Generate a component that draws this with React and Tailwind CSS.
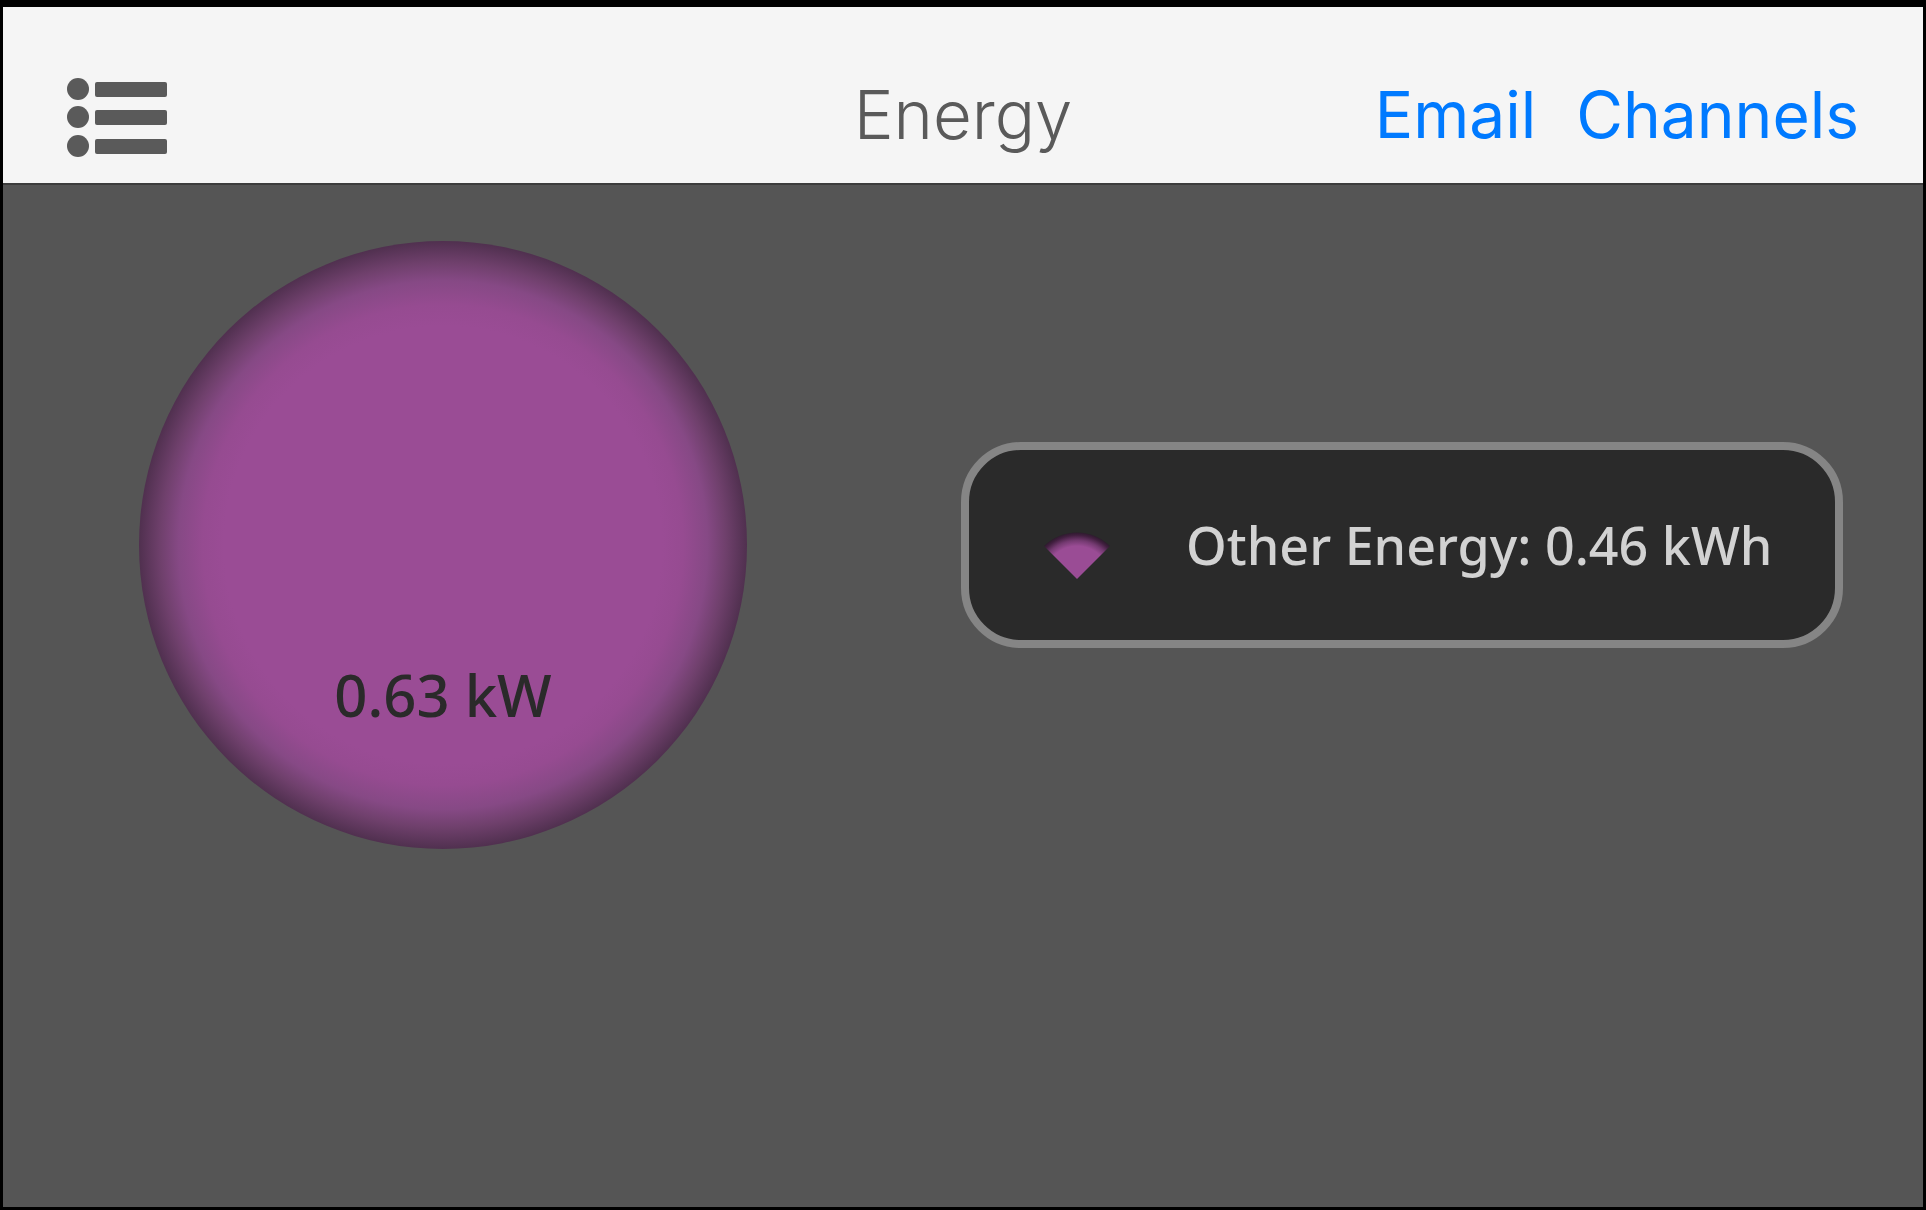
const menuRows = [18, 46, 75];

const readings = [{ label: "Other Energy", value: "0.46 kWh" }];

function MenuIcon() {
  return (
    <svg width="100" height="84" viewBox="0 0 100 84" fill="#5a5a5a" overflow="visible" aria-hidden="true">
      {menuRows.map((y) => (
        <g key={y}>
          <circle cx="11" cy={y} r="11" />
          <rect x="28" y={y - 7} width="72" height="15" rx="2" />
        </g>
      ))}
    </svg>
  );
}

function WedgeIcon() {
  return (
    <svg width="66" height="68" viewBox="0 0 66 68" aria-hidden="true">
      <defs>
        <radialGradient id="wedge" gradientUnits="userSpaceOnUse" cx="33" cy="68" r="47">
          <stop offset="0.7" stopColor="#9a4c95" />
          <stop offset="0.82" stopColor="#743a71" />
          <stop offset="0.93" stopColor="#421f40" />
          <stop offset="1" stopColor="#2a1a2a" />
        </radialGradient>
      </defs>
      <path d="M33 68 L0 35 A47 47 0 0 1 66 35 Z" fill="url(#wedge)" />
    </svg>
  );
}

export default function App() {
  return (
    <div className="flex min-h-screen flex-col border-x-3 border-t-7 border-b-3 border-black bg-[#555555] font-['Noto_Sans',sans-serif]">
      <header className="grid h-[178px] grid-cols-[1fr_auto_1fr] items-end border-b-2 border-[#3c3c3c] bg-[#f5f5f5] px-16 pb-7 font-[Inter,sans-serif]">
        <button type="button" aria-label="Menu" className="cursor-pointer justify-self-start">
          <MenuIcon />
        </button>
        <h1 className="text-[67px] leading-20 font-light text-[#5a5a5a]">Energy</h1>
        <nav className="flex gap-10 justify-self-end text-[64px] leading-20 text-[#007aff]">
          <a href="#email">Email</a>
          <a href="#channels">Channels</a>
        </nav>
      </header>

      <main className="flex items-center gap-[214px] pt-14 pr-20 pl-[136px]">
        {/* Current power */}
        <div className="flex size-[608px] shrink-0 items-end justify-center rounded-full bg-[radial-gradient(closest-side,#9a4c95_72%,#964b91_79%,#864985_87%,#6f406c_93%,#50304f_100%)] pb-[114px]">
          <span className="text-[58px] leading-20 font-medium text-[#2a2a2a]">0.63 kW</span>
        </div>

        {/* Totals per channel */}
        <ul className="flex min-h-[206px] flex-1 flex-col justify-center rounded-[60px] border-8 border-[#858585] bg-[#2a2a2a] pl-[75px]">
          {readings.map((r) => (
            <li key={r.label} className="flex items-center gap-[76px]">
              <WedgeIcon />
              <span className="text-[52px] leading-20 font-medium whitespace-nowrap text-[#d2d2d2]">
                {r.label}: {r.value}
              </span>
            </li>
          ))}
        </ul>
      </main>
    </div>
  );
}
